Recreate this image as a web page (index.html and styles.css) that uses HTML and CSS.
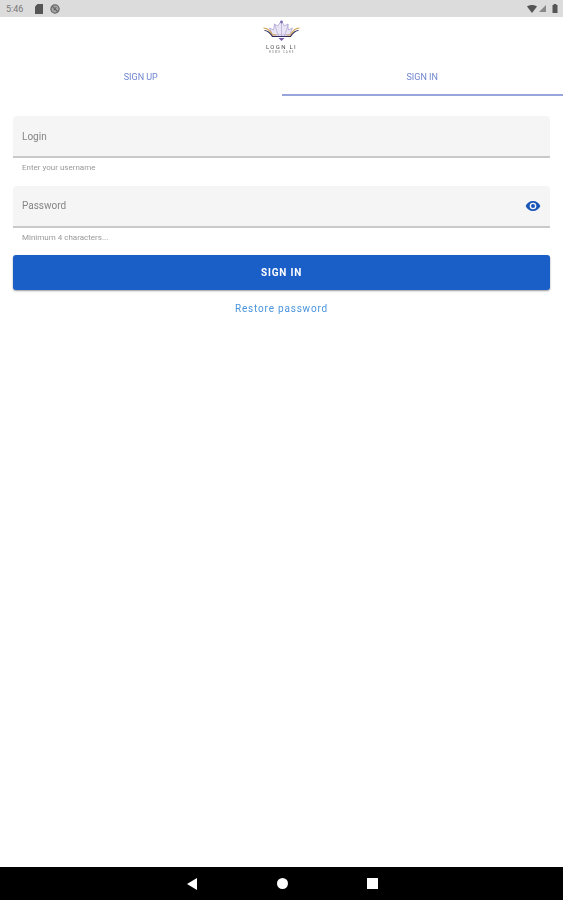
FILE: index.html
```html
<!DOCTYPE html>
<html lang="en">
<head>
    <meta charset="UTF-8">
    <meta name="viewport" content="width=device-width, initial-scale=1.0">
    <title>Sign in</title>
    <link rel="stylesheet" href="styles.css">
</head>
<body>
    <div class="screen">
        <!-- Android status bar -->
        <div class="status-bar">
            <span class="status-time">5:46</span>
            <svg class="status-icon sim" width="8" height="10" viewBox="0 0 8 10"><path d="M2.5 0H8v10H0V2.5z" fill="#555"/></svg>
            <svg class="status-icon blocked" width="10" height="10" viewBox="0 0 11 11"><circle cx="5.5" cy="5.5" r="4.5" fill="#aaa" stroke="#666" stroke-width="1.4"/><path d="M2.5 2.5l6 6M7 3.5L4 7" stroke="#666" stroke-width="1.3"/></svg>
            <div class="status-right">
                <svg width="10" height="8" viewBox="0 0 10 8"><path d="M0 1.5C3-.5 7-.5 10 1.5L5 8z" fill="#555"/></svg>
                <svg width="7" height="7" viewBox="0 0 7 7"><path d="M7 0v7H0z" fill="#888"/></svg>
                <svg class="battery" width="6" height="9" viewBox="0 0 5 9"><path d="M1.2 0h2.6v1H5v8H0V1h1.2z" fill="#555"/></svg>
            </div>
        </div>

        <div class="logo-row">
            <div class="logo">
                <svg width="37" height="21" viewBox="0 0 36 21">
                    <path d="M18 1l3 5 3-2 1 6 4-2-3 7H9L6 8l4 2 1-6 3 2z" fill="#e9e5f4" stroke="#a79ad0" stroke-width=".7"/>
                    <path d="M18 1v15M11 4l4 12M25 4l-4 12" fill="none" stroke="#a79ad0" stroke-width=".6"/>
                    <circle cx="18" cy="2" r="1.4" fill="#7f6fb5"/>
                    <path d="M0 8c4 0 7 3 9 7h4" fill="none" stroke="#d0a24a" stroke-width="1.1"/>
                    <path d="M36 8c-4 0-7 3-9 7h-4" fill="none" stroke="#d0a24a" stroke-width="1.1"/>
                    <path d="M1 10.500c4 0 6 3 8 6h18c2-3 4-6 8-6" fill="none" stroke="#2e2a5c" stroke-width="1.2"/>
                    <path d="M15 18l3 3 3-3z" fill="#7a5fa8"/>
                </svg>
                <span class="logo-name">LOGN LI</span>
                <span class="logo-sub">HOME CARE</span>
            </div>
        </div>

        <div class="tabs">
            <div class="tab">SIGN UP</div>
            <div class="tab tab-active">SIGN IN</div>
        </div>

        <form class="login-form">
            <div class="field">
                <div class="field-box">
                    <span class="field-label">Login</span>
                </div>
                <div class="field-hint">Enter your username</div>
            </div>
            <div class="field">
                <div class="field-box">
                    <span class="field-label">Password</span>
                    <svg class="eye" width="16" height="16" viewBox="0 0 24 24"><path d="M12 4.500C7 4.500 2.700 7.600 1 12c1.700 4.400 6 7.500 11 7.500s9.300-3.100 11-7.500c-1.700-4.400-6-7.500-11-7.500zM12 17a5 5 0 1 1 0-10 5 5 0 0 1 0 10zm0-8a3 3 0 1 0 0 6 3 3 0 0 0 0-6z" fill="#1a56b8"/></svg>
                </div>
                <div class="field-hint">Minimum 4 characters...</div>
            </div>
            <button class="submit" type="button">SIGN IN</button>
            <a class="restore" href="#">Restore password</a>
        </form>

        <!-- Android nav bar -->
        <div class="nav-bar">
            <svg width="12" height="12" viewBox="0 0 12 12"><path d="M11 0v12L1 6z" fill="#fff"/></svg>
            <span class="nav-home"></span>
            <span class="nav-recent"></span>
        </div>
    </div>
</body>
</html>
```

FILE: styles.css
```css
/* General Page Styling */
body {
    margin: 0;
    font-family: Roboto, "Liberation Sans", sans-serif;
    background-color: #fff;
}

/* The reference is an upscaled capture, so everything is slightly soft */
.screen {
    height: 900px;
    display: flex;
    flex-direction: column;
    overflow: hidden;
    filter: blur(0.45px);
}

/* Status Bar */
.status-bar {
    height: 17px;
    flex-shrink: 0;
    display: flex;
    align-items: center;
    padding: 0 5px 0 6px;
    background-color: #dcdcdc;
    color: #777;
}

.status-time {
    font-size: 9px;
    width: 29px;
}

.status-icon.blocked {
    margin-left: 7px;
}

.status-right {
    margin-left: auto;
    display: flex;
    align-items: center;
    gap: 2px;
}

.battery {
    margin-left: 4px;
}

/* Logo */
.logo-row {
    height: 37px;
    flex-shrink: 0;
    display: flex;
    justify-content: center;
    padding-top: 3px;
    box-sizing: border-box;
}

.logo {
    width: 37px;
    display: flex;
    flex-direction: column;
    align-items: center;
}

.logo-name {
    margin-top: 2px;
    font-size: 6px;
    line-height: 7px;
    letter-spacing: 1.3px;
    color: #555;
    white-space: nowrap;
}

.logo-sub {
    font-size: 3px;
    line-height: 4px;
    letter-spacing: 1px;
    color: #888;
    white-space: nowrap;
}

/* Tabs */
.tabs {
    display: flex;
    height: 42px;
    flex-shrink: 0;
}

.tab {
    flex: 1;
    text-align: center;
    font-size: 9px;
    line-height: 46px;
    color: #6f86cf;
    box-sizing: border-box;
}

.tab-active {
    border-bottom: 2px solid #97a5dc;
}

/* Form */
.login-form {
    flex: 1;
    display: flex;
    flex-direction: column;
    padding: 20px 13px 0;
}

.field {
    height: 69.5px;
}

.field-box {
    height: 42px;
    box-sizing: border-box;
    display: flex;
    align-items: center;
    justify-content: space-between;
    padding: 0 9px;
    background-color: #f5f5f5;
    border-bottom: 2px solid #c9c9c9;
    border-radius: 4px 4px 0 0;
}

.field-label {
    font-size: 10px;
    color: #858585;
}

.eye {
    margin-top: 1px;
}

.field-hint {
    margin: 5px 9px 0;
    font-size: 8px;
    line-height: 10px;
    color: #999;
}

.submit {
    height: 35px;
    border: 0;
    border-radius: 3px;
    background-color: #1a5fc8;
    box-shadow: 0 1px 2px rgba(0, 0, 0, 0.4);
    color: #fff;
    font-family: inherit;
    font-size: 10px;
    font-weight: 700;
    letter-spacing: 0.8px;
}

.restore {
    margin-top: 11.5px;
    text-align: center;
    font-size: 10px;
    line-height: 14px;
    letter-spacing: 0.8px;
    color: #4a94dc;
    text-decoration: none;
}

/* Nav Bar */
.nav-bar {
    height: 33px;
    flex-shrink: 0;
    display: grid;
    grid-template-columns: 12px 11px 11px;
    justify-content: center;
    column-gap: 79px;
    align-items: center;
    justify-items: center;
    background-color: #000;
}

.nav-home {
    width: 11px;
    height: 11px;
    border-radius: 50%;
    background-color: #fff;
}

.nav-recent {
    width: 11px;
    height: 11px;
    background-color: #fff;
}
```
